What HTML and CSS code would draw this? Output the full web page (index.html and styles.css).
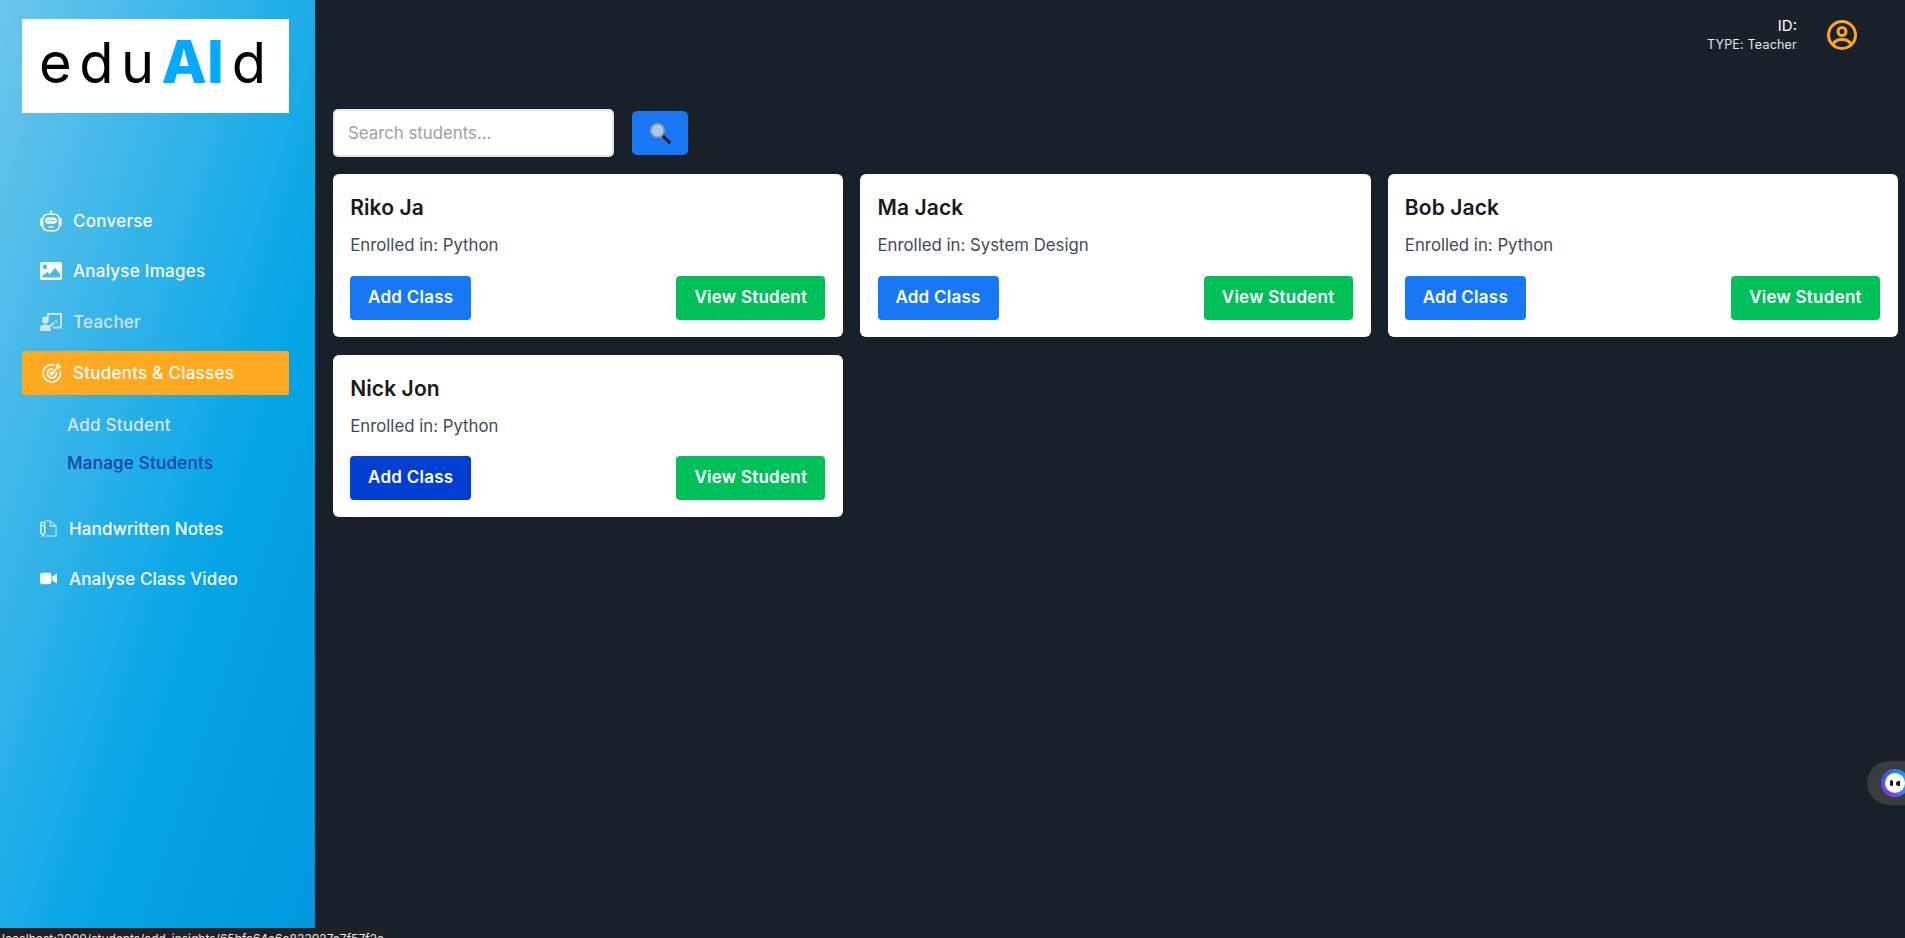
FILE: index.html
```html
<!DOCTYPE html>
<html lang="en">
<head>
<meta charset="utf-8">
<title>eduAId - Manage Students</title>
<link rel="stylesheet" href="styles.css">
</head>
<body>
<div class="app">
  <aside class="sidebar">
    <div class="logo"><span class="logo-thin">edu</span><span class="logo-ai">AI</span><span class="logo-thin logo-d">d</span></div>
    <nav class="nav">
      <a class="nav-item">
        <svg class="nav-icon" viewBox="0 0 22 22" fill="none" stroke="#fff" stroke-width="1.5"><path d="M11 .8v3.2"/><circle cx="11" cy="1.4" r="1" fill="#fff" stroke="none"/><rect x="2.6" y="4.2" width="16.8" height="16.6" rx="5"/><rect x="5.2" y="7.6" width="11.6" height="6.2" rx="3" fill="#fff" stroke="none"/><path d="M7 10.7h2.4l1-1 1.2 1.6 1-.6H15" stroke="#3fb2e4" stroke-width=".9"/><path d="M8.5 17h5" stroke-width="1.3"/><path d="M2.6 9H1v6h1.6M19.4 9H21v6h-1.6"/></svg>
        <span>Converse</span>
      </a>
      <a class="nav-item">
        <svg class="nav-icon" viewBox="0 0 22 18"><path fill="#fff" fill-rule="evenodd" d="M2 0h18a2 2 0 0 1 2 2v14a2 2 0 0 1-2 2H2a2 2 0 0 1-2-2V2a2 2 0 0 1 2-2Zm3 2.600a2.300 2.300 0 1 0 0 4.600 2.300 2.300 0 0 0 0-4.600ZM2 15.600h18v-3.800l-5.200-6-5 6.400-2.600-2.200L2 14Z"/></svg>
        <span>Analyse Images</span>
      </a>
      <a class="nav-item nav-muted">
        <svg class="nav-icon" viewBox="0 0 22 18" fill="#d2e3ef"><path d="M7 1.500V0h15v15.500H13v-2h7V2H9v2.200H7Z"/><path d="m9.500 12.500 4-3.500 1.200 1.300-3 3.200H9.500ZM14 7.500h3v3Z"/><circle cx="5.400" cy="7" r="3.400"/><path d="M0 18v-2.600C0 12.900 2 11.500 5.400 11.500s5.400 1.400 5.400 3.900V18Z"/></svg>
        <span>Teacher</span>
      </a>
      <a class="nav-item nav-active">
        <svg class="nav-icon nav-icon-target" viewBox="0 0 20 20" fill="none" stroke="#fff" stroke-width="1.700"><path d="M12.600 2.100A8.700 8.700 0 1 0 18 7.600"/><path d="M11.200 6.100a4.500 4.500 0 1 0 3 3"/><circle cx="9.600" cy="10.600" r="1.200" fill="#fff"/><path d="m9.800 10.400 5-5"/><path d="M14 2.200v3.400h3.400L20 3h-3V0Z" fill="#fff" stroke="none"/></svg>
        <span>Students &amp; Classes</span>
      </a>
      <div class="subnav">
        <a class="sub-item">Add Student</a>
        <a class="sub-item sub-current">Manage Students</a>
      </div>
      <a class="nav-item nav-tight">
        <svg class="nav-icon nav-icon-small" viewBox="0 0 18 18" fill="none" stroke="#fff" stroke-width="1.100"><path d="M5.500 1H11l6 5.500V17H5.500" stroke="#d9eefa"/><path d="M11 1v5.500h6" stroke="#d9eefa"/><path d="M1 4.200a2 2 0 0 1 4 0v9.400L3 17l-2-3.400Z" stroke-width="1.300"/><path d="M1 6h4"/></svg>
        <span>Handwritten Notes</span>
      </a>
      <a class="nav-item nav-tight">
        <svg class="nav-icon nav-icon-small" viewBox="0 0 18 12" fill="#fff"><rect x="0" y="0" width="12" height="12" rx="2.200"/><path d="m13 4 4.400-3c.3-.2.6 0 .6.4v9.200c0 .4-.3.6-.6.4L13 8Z"/></svg>
        <span>Analyse Class Video</span>
      </a>
    </nav>
  </aside>
  <main class="main">
    <header class="topbar">
      <div class="user">
        <div class="user-id">ID:</div>
        <div class="user-type">TYPE: Teacher</div>
      </div>
      <svg class="avatar" viewBox="0 0 30 30" fill="none" stroke="#ffa620" stroke-width="3"><circle cx="15" cy="15" r="13.500"/><circle cx="15" cy="11.500" r="4"/><path d="M6 24.500c1.600-3.500 5-5 9-5s7.400 1.500 9 5"/></svg>
    </header>
    <section class="content">
      <form class="search">
        <input class="search-input" type="text" placeholder="Search students...">
        <button class="search-btn" type="button" aria-label="Search">
          <svg viewBox="0 0 22 22" width="22" height="22"><path d="m13.500 13.500 6.800 6.800" stroke="#111" stroke-width="3" stroke-linecap="round"/><circle cx="8.500" cy="8.500" r="6.800" fill="#a9c8ea" stroke="#8c939a" stroke-width="1.800"/></svg>
        </button>
      </form>
      <div class="cards">
        <article class="card">
          <h2 class="card-name">Riko Ja</h2>
          <p class="card-course">Enrolled in: Python</p>
          <div class="card-actions"><button class="btn btn-blue" type="button">Add Class</button><button class="btn btn-green" type="button">View Student</button></div>
        </article>
        <article class="card">
          <h2 class="card-name">Ma Jack</h2>
          <p class="card-course">Enrolled in: System Design</p>
          <div class="card-actions"><button class="btn btn-blue" type="button">Add Class</button><button class="btn btn-green" type="button">View Student</button></div>
        </article>
        <article class="card">
          <h2 class="card-name">Bob Jack</h2>
          <p class="card-course">Enrolled in: Python</p>
          <div class="card-actions"><button class="btn btn-blue" type="button">Add Class</button><button class="btn btn-green" type="button">View Student</button></div>
        </article>
        <article class="card">
          <h2 class="card-name">Nick Jon</h2>
          <p class="card-course">Enrolled in: Python</p>
          <div class="card-actions"><button class="btn btn-blue btn-hover" type="button">Add Class</button><button class="btn btn-green" type="button">View Student</button></div>
        </article>
      </div>
    </section>
  </main>
</div>
<div class="widget"><span class="widget-face"><span class="widget-inner"><span class="eye"></span><span class="eye eye-wink"></span></span></span></div>
<div class="statusbar">localhost:3000/students/add_insights/65bfc64e6e833027e7f57f2e</div>
</body>
</html>
```

FILE: styles.css
```css
* { box-sizing: border-box; }
html, body { height: 100%; }
body {
  margin: 0;
  overflow: hidden;
  background: #18202a;
  font-family: Inter, "Noto Sans", sans-serif;
}
.app { display: flex; height: 938px; }

.sidebar {
  flex: 0 0 315px;
  padding: 19px 26px 0 22px;
  background: linear-gradient(to bottom right, #6cc6ec 0%, #04a5e6 64%, #0096dd 100%);
}
.logo {
  display: flex;
  align-items: baseline;
  height: 94px;
  padding: 13px 0 0 17px;
  background: #fff;
  line-height: 60px;
  color: #000;
}
.logo-thin { font-size: 56px; font-weight: 400; letter-spacing: 7.500px; }
.logo-ai { margin-left: 0; font-size: 59px; font-weight: 800; letter-spacing: 0; color: #00aaff; }
.logo-d { margin-left: 8px; }

.nav { margin-top: 86px; display: flex; flex-direction: column; }
.nav-item {
  display: flex;
  align-items: center;
  gap: 11px;
  height: 44px;
  margin-bottom: 6.400px;
  padding-left: 18px;
  border-radius: 2px;
  font-size: 17px;
  font-weight: 500;
  letter-spacing: .25px;
  color: #fff;
}
.nav-muted { color: #d2e3ef; margin-bottom: 7.200px; }
.nav-active { background: #ffa921; margin-bottom: 0; }
.nav-tight { gap: 12px; margin-bottom: 6px; letter-spacing: .15px; }
.nav-icon { flex: none; width: 22px; height: 22px; }
.nav-icon-target { width: 20px; height: 20px; margin: 0 0 0 2px; }
.nav-icon-small { width: 17px; height: 17px; }
.subnav { display: flex; flex-direction: column; gap: 18px; padding: 20px 0 34px 45px; }
.sub-item { font-size: 17px; font-weight: 500; letter-spacing: .25px; line-height: 20px; color: #dbe8f1; }
.sub-current { color: #0c41ab; }

.main { flex: 1; min-width: 0; }
.topbar { display: flex; justify-content: flex-end; align-items: center; gap: 30px; height: 69px; padding-right: 48px; }
.user { text-align: right; color: #fff; }
.user-id { font-size: 15px; line-height: 19px; }
.user-type { margin-top: 2px; font-size: 12.500px; line-height: 16px; color: #e3e6ea; letter-spacing: .2px; }
.avatar { width: 30px; height: 30px; }

.content { padding: 40px 7px 0 18px; }
.search { display: flex; align-items: center; gap: 18px; margin-bottom: 17px; }
.search-input {
  width: 281px;
  height: 48px;
  padding: 0 13px;
  border: 2px solid #e2e6ec;
  border-radius: 5px;
  background: #fff;
  font: 400 16.800px Inter, sans-serif;
  outline: none;
}
.search-input::placeholder { color: #9aa1ad; opacity: 1; }
.search-btn {
  display: flex;
  align-items: center;
  justify-content: center;
  width: 56px;
  height: 44px;
  padding: 0;
  border: 0;
  border-radius: 5px;
  background: #1877f2;
}
.cards { display: grid; grid-template-columns: repeat(3, 1fr); gap: 18px 17px; }
.card { display: flex; flex-direction: column; height: 162.500px; padding: 19px 18px 17px 17.200px; border-radius: 6px; background: #fff; }
.card-name { margin: 0; font-size: 21px; line-height: 29px; font-weight: 600; letter-spacing: .1px; color: #1a1a1a; }
.card-course { margin: 11px 0 0; font-size: 16.800px; line-height: 24px; color: #424b59; }
.card-actions { display: flex; justify-content: space-between; margin-top: auto; }
.btn {
  height: 44px;
  padding: 0 0 2px;
  width: 121px;
  border: 0;
  border-radius: 4px;
  font: 600 17px Inter, sans-serif;
  letter-spacing: .25px;
  color: #fff;
}
.btn-blue { background: #1877f2; }
.btn-hover { background: #003fd1; }
.btn-green { width: 149px; background: #00c05a; }

.widget {
  position: fixed;
  right: 0;
  top: 761px;
  display: flex;
  align-items: center;
  width: 38px;
  height: 44px;
  padding-left: 14px;
  border-radius: 22px 0 0 22px;
  background: #3a3c3e;
}
.widget-face {
  display: flex;
  align-items: center;
  justify-content: center;
  flex: none;
  width: 28px;
  height: 28px;
  border-radius: 50%;
  background: conic-gradient(from 200deg, #7c3bf0, #2f5ff5, #12b7e8, #7c3bf0);
}
.widget-inner {
  display: flex;
  align-items: center;
  justify-content: center;
  gap: 3px;
  width: 20px;
  height: 20px;
  border-radius: 50%;
  background: #fff;
}
.eye { width: 3px; height: 6px; border-radius: 2px; background: #15151a; }
.eye-wink { width: 4px; height: 5px; border-radius: 3px 0 0 3px; }

.statusbar {
  position: fixed;
  left: 0;
  bottom: 0;
  width: 388px;
  height: 10px;
  padding: 4px 0 0 2px;
  overflow: hidden;
  background: #1f2224;
  border-radius: 0 3px 0 0;
  font-size: 12px;
  line-height: 14px;
  white-space: nowrap;
  color: #e8e8e8;
}
```
